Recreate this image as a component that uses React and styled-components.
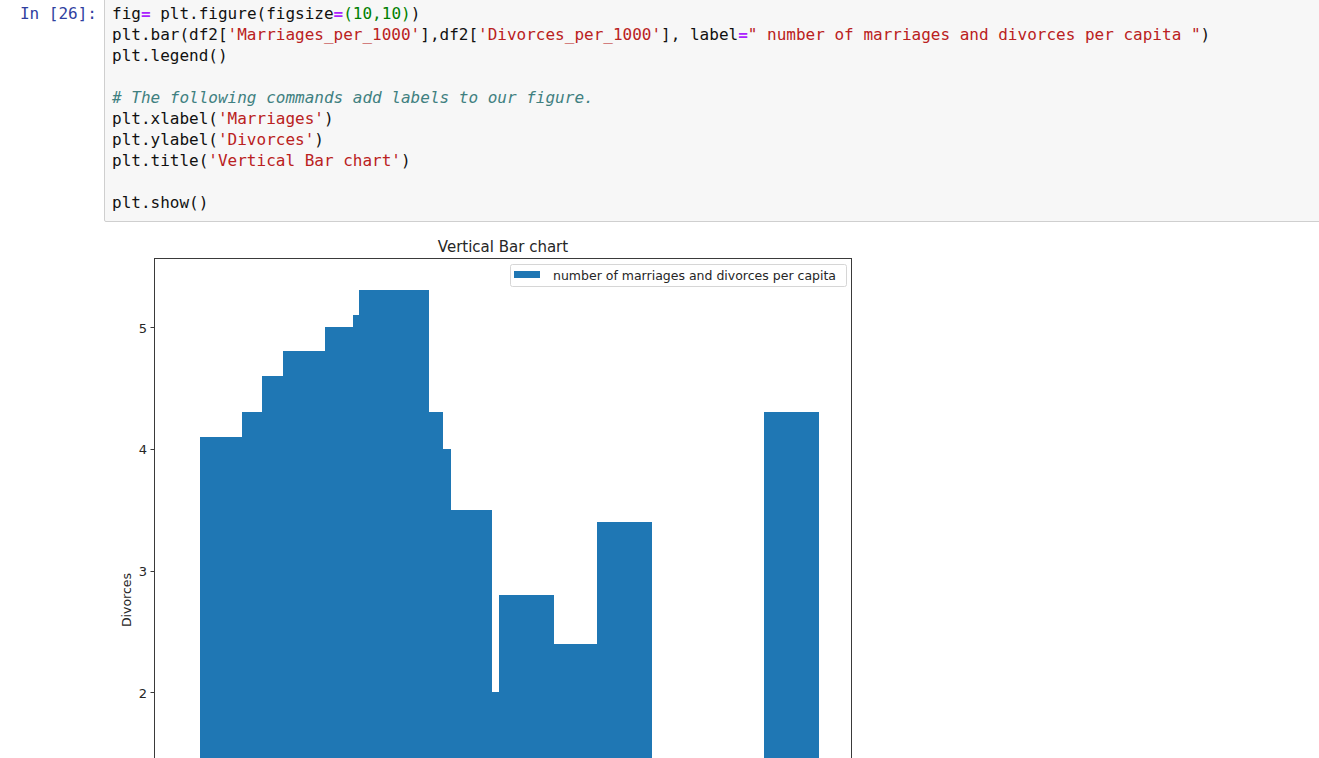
import React from 'react'
import styled, { createGlobalStyle } from 'styled-components'

const GlobalStyle = createGlobalStyle`
  html, body {
    margin: 0;
    padding: 0;
    background: #fff;
    overflow: hidden;
  }
`

const MONO = `"DejaVu Sans Mono", "Liberation Mono", monospace`
const PLOT_FONT = `"DejaVu Sans", "Liberation Sans", sans-serif`
const BLUE = '#1f77b4'

// y position of a data value on the page
const yOf = (v) => 327 + (5 - v) * 121.8
const AXIS_BOTTOM = yOf(0)

const bars = [
  [200, 242.3, 4.1],
  [242.3, 262.3, 4.3],
  [262.3, 283.3, 4.6],
  [283.3, 325, 4.8],
  [325, 353.3, 5.0],
  [353.3, 359.3, 5.1],
  [359.3, 429, 5.3],
  [429, 443, 4.3],
  [443, 450.7, 4.0],
  [450.7, 491.7, 3.5],
  [491.7, 499.3, 2.0],
  [499.3, 554, 2.8],
  [554, 596.7, 2.4],
  [596.7, 651.7, 3.4],
  [764, 819, 4.3],
]

// only the ticks that fall inside the visible part of the figure
const ticks = [5, 4, 3, 2]

function App() {
  return (
    <>
      <GlobalStyle />
      <Notebook>
        <CodeCell>
          <Prompt>In&nbsp;[26]:</Prompt>
          <InputArea>
            <Line>
              fig<Op>=</Op> plt.figure(figsize<Op>=</Op><Num>(10,10)</Num>)
            </Line>
            <Line>
              plt.bar(df2[<Str>'Marriages_per_1000'</Str>],df2[<Str>'Divorces_per_1000'</Str>], label<Op>=</Op>
              <Str>" number of marriages and divorces per capita "</Str>)
            </Line>
            <Line>plt.legend()</Line>
            <Line />
            <Line>
              <Comment># The following commands add labels to our figure.</Comment>
            </Line>
            <Line>
              plt.xlabel(<Str>'Marriages'</Str>)
            </Line>
            <Line>
              plt.ylabel(<Str>'Divorces'</Str>)
            </Line>
            <Line>
              plt.title(<Str>'Vertical Bar chart'</Str>)
            </Line>
            <Line />
            <Line>plt.show()</Line>
          </InputArea>
        </CodeCell>
        <OutputArea>
          <Figure width="760" height="536" viewBox="104 222 760 536">
            <g shapeRendering="crispEdges">
              {bars.map(([x0, x1, v], i) => (
                <rect
                  key={i}
                  x={Math.round(x0)}
                  y={Math.round(yOf(v))}
                  width={Math.round(x1) - Math.round(x0)}
                  height={AXIS_BOTTOM - Math.round(yOf(v))}
                  fill={BLUE}
                />
              ))}
            </g>
            <rect
              x="154.5"
              y="258.5"
              width="697"
              height={AXIS_BOTTOM - 258.5}
              fill="none"
              stroke="#3a3a3a"
              strokeWidth="1"
            />
            {ticks.map((t) => (
              <g key={t}>
                <line
                  x1="150.5"
                  x2="154.5"
                  y1={Math.round(yOf(t)) + 0.5}
                  y2={Math.round(yOf(t)) + 0.5}
                  stroke="#3a3a3a"
                />
                <TickLabel x="147" y={yOf(t) + 1}>
                  {t}
                </TickLabel>
              </g>
            ))}
            <PlotTitle x="503" y="251.5">
              Vertical Bar chart
            </PlotTitle>
            <AxisLabel transform="translate(126 600) rotate(-90)">Divorces</AxisLabel>
            <rect
              x="510.5"
              y="264.5"
              width="336"
              height="22"
              rx="2"
              fill="#fff"
              fillOpacity="0.8"
              stroke="#d6d6d6"
            />
            <rect x="514" y="271" width="26" height="7" fill={BLUE} />
            <LegendText x="553" y="275.5">
              number of marriages and divorces per capita
            </LegendText>
          </Figure>
        </OutputArea>
      </Notebook>
    </>
  )
}

export default App

const Notebook = styled.div`
  margin-top: -6px;
  display: flex;
  flex-direction: column;
`

const CodeCell = styled.div`
  display: flex;
  align-items: flex-start;
`

const Prompt = styled.div`
  flex: none;
  width: 104px;
  box-sizing: border-box;
  padding: 9px 7px 0 0;
  text-align: right;
  color: #303f9f;
  font-family: ${MONO};
  font-size: 16px;
  line-height: 21px;
  white-space: nowrap;
`

const InputArea = styled.div`
  flex: 1;
  margin-right: -12px;
  background: #f7f7f7;
  border: 1px solid #cfcfcf;
  border-radius: 2px;
  padding: 8px 7px;
  font-family: ${MONO};
  font-size: 16px;
  line-height: 21px;
  color: #111;
  white-space: pre;
`

const Line = styled.div`
  min-height: 21px;
`

const Str = styled.span`
  color: #ba2121;
`

const Num = styled.span`
  color: #008000;
`

const Op = styled.span`
  color: #aa22ff;
  font-weight: bold;
`

const Comment = styled.span`
  color: #408080;
  font-style: italic;
`

const OutputArea = styled.div`
  display: flex;
  padding-left: 104px;
`

const Figure = styled.svg`
  display: block;
  font-family: ${PLOT_FONT};
`

const TickLabel = styled.text`
  font-size: 13px;
  fill: #262626;
  text-anchor: end;
  dominant-baseline: central;
`

const PlotTitle = styled.text`
  font-size: 15px;
  fill: #262626;
  text-anchor: middle;
`

const AxisLabel = styled.text`
  font-size: 12.5px;
  fill: #262626;
  text-anchor: middle;
  dominant-baseline: central;
`

const LegendText = styled.text`
  font-size: 12.5px;
  fill: #262626;
  dominant-baseline: central;
`
